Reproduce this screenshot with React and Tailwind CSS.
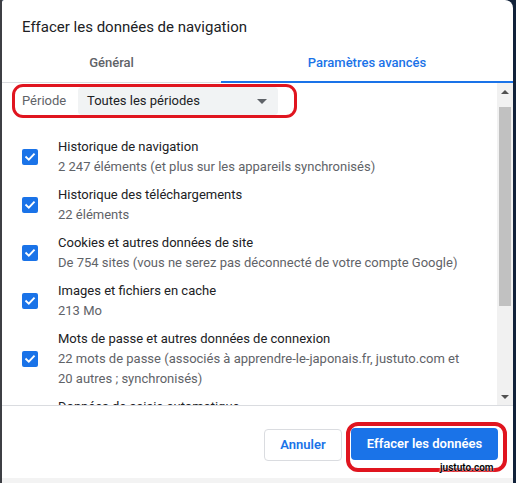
import React from "react";

const items = [
  { title: "Historique de navigation", sub: ["2 247 éléments (et plus sur les appareils synchronisés)"] },
  { title: "Historique des téléchargements", sub: ["22 éléments"] },
  { title: "Cookies et autres données de site", sub: ["De 754 sites (vous ne serez pas déconnecté de votre compte Google)"] },
  { title: "Images et fichiers en cache", sub: ["213 Mo"] },
  {
    title: "Mots de passe et autres données de connexion",
    sub: ["22 mots de passe (associés à apprendre-le-japonais.fr, justuto.com et", "20 autres ; synchronisés)"],
  },
  { title: "Données de saisie automatique", sub: ["Aucun élément"] },
];

function Check() {
  return (
    <div className="w-[16px] h-[16px] rounded-[2px] bg-[#1a73e8] flex items-center justify-center shrink-0">
      <svg width="12" height="12" viewBox="0 0 12 12">
        <path d="M2.2 6.2 L4.8 8.7 L9.9 3.4" fill="none" stroke="white" strokeWidth="1.9" strokeLinecap="square" />
      </svg>
    </div>
  );
}

export default function App() {
  return (
    <div
      className="w-[516px] h-[483px] flex bg-[#12223a] relative overflow-hidden"
      style={{ fontFamily: "Roboto, 'Liberation Sans', sans-serif" }}
    >
      <div className="w-[2px] bg-[#3d3f44] shrink-0" />
      <div className="w-[511px] flex flex-col shrink-0">
        <div className="h-[478px] bg-white rounded-tr-[8px] rounded-tl-[2px] flex flex-col overflow-hidden">
          {/* title */}
          <div className="h-[44px] pl-[20px] pt-[17px] text-[15px] leading-[20px] text-[#202124]">
            Effacer les données de navigation
          </div>
          {/* tabs */}
          <div className="h-[39px] flex border-b border-[#dadce0] text-[13px] font-medium">
            <div className="w-[219px] flex items-center justify-center text-[#5f6368]">Général</div>
            <div className="flex-1 flex items-center justify-center text-[#1a73e8] border-b-2 border-[#1a73e8] -mb-px">
              Paramètres avancés
            </div>
          </div>
          {/* content */}
          <div className="h-[323px] flex border-b border-[#dadce0]">
            <div className="flex-1 overflow-hidden pt-[4px]">
              <div className="flex items-center h-[28px] pl-[20px] text-[13px]">
                <span className="text-[#5f6368] w-[56px]">Période</span>
                <div className="w-[200px] h-[28px] bg-[#f1f3f4] rounded-[4px] flex items-center pl-[9px] pr-[9px] text-[#202124]">
                  <span className="flex-1">Toutes les périodes</span>
                  <svg width="10" height="5" viewBox="0 0 10 5" className="mr-[2px]">
                    <path d="M0 0 L10 0 L5 5 Z" fill="#5f6368" />
                  </svg>
                </div>
              </div>
              <div className="mt-[22px] flex flex-col gap-[8px]">
                {items.map((it, i) => (
                  <div key={i} className="flex items-center pl-[20px]">
                    <Check />
                    <div className="ml-[20px] text-[13px] leading-[20px]">
                      <div className="text-[#202124]">{it.title}</div>
                      {it.sub.map((s, j) => (
                        <div key={j} className="text-[#5f6368] whitespace-nowrap">{s}</div>
                      ))}
                    </div>
                  </div>
                ))}
              </div>
            </div>
            {/* scrollbar */}
            <div className="w-[16px] bg-[#f1f1f1] flex flex-col shrink-0">
              <div className="h-[17px] flex items-center justify-center">
                <svg width="8" height="4" viewBox="0 0 8 4"><path d="M0 4 L8 4 L4 0 Z" fill="#505050" /></svg>
              </div>
              <div className="mt-[7px] mx-[2px] h-[199px] bg-[#c1c1c1]" />
              <div className="flex-1" />
              <div className="h-[17px] flex items-center justify-center">
                <svg width="8" height="4" viewBox="0 0 8 4"><path d="M0 0 L8 0 L4 4 Z" fill="#505050" /></svg>
              </div>
            </div>
          </div>
          {/* footer */}
          <div className="flex-1 flex justify-end items-start pt-[23px] pr-[15px] gap-[9px] text-[13px] font-semibold">
            <button className="w-[78px] h-[32px] border border-[#dadce0] rounded-[4px] text-[#1a73e8] bg-white">
              Annuler
            </button>
            <button className="w-[147px] h-[32px] rounded-[4px] bg-[#1a73e8] text-white -mt-px">
              Effacer les données
            </button>
          </div>
        </div>
        <div className="flex-1 bg-[#f3f3f3]" />
      </div>
      <div className="flex-1 bg-[#12223a]" />

      {/* red annotations */}
      <div className="absolute left-[12px] top-[84px] w-[285px] h-[34px] border-[3px] border-[#e0151f] rounded-[11px] pointer-events-none" />
      <div className="absolute left-[346px] top-[422px] w-[161px] h-[50px] border-[4px] border-[#e0151f] rounded-[12px] pointer-events-none" />
      {/* watermark */}
      <div
        className="absolute left-[440px] top-[462px] text-[10px] leading-[12px] text-black font-semibold"
        style={{ textShadow: "0 0 2px #fff, 0 0 1px #fff" }}
      >
        justuto.com
      </div>
    </div>
  );
}
